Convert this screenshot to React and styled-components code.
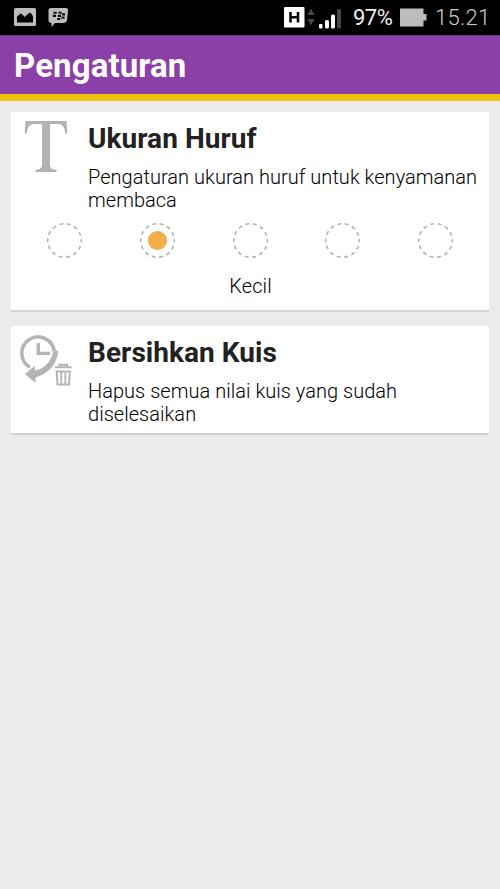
import React, { useState } from 'react'
import styled, { createGlobalStyle } from 'styled-components'

const GlobalStyle = createGlobalStyle`
    * {
        box-sizing: border-box;
    }
    body {
        margin: 0;
        background: #ebebeb;
        font-family: Roboto, sans-serif;
        color: #222;
    }
`

const Screen = styled.div({
    width: 500,
    height: 889,
    overflow: 'hidden',
    backgroundColor: '#ebebeb'
})

const StatusBar = styled.div({
    display: 'flex',
    justifyContent: 'space-between',
    height: 35,
    paddingRight: 10,
    backgroundColor: '#000'
})

const StatusText = styled.span`
    width: ${({ $width }) => $width}px;
    margin-left: 8px;
    font-size: 22px;
    line-height: 35px;
    font-weight: ${({ $weight }) => $weight};
    letter-spacing: ${({ $spacing }) => $spacing}px;
    color: ${({ $color }) => $color};
    white-space: nowrap;
`

const StatusGroup = styled.div({
    display: 'flex'
})

const Header = styled.header({
    height: 66,
    paddingLeft: 14,
    backgroundColor: '#8b3fa8',
    borderTop: '1px solid #6b3480',
    borderBottom: '7px solid #efc20f'
})

const HeaderTitle = styled.h1({
    margin: 0,
    fontSize: 33,
    lineHeight: '59px',
    fontWeight: 700,
    letterSpacing: 0.1,
    color: 'white'
})

const CardList = styled.main({
    display: 'flex',
    flexDirection: 'column',
    gap: 14,
    padding: '11px 11px 0'
})

const Card = styled.section`
    height: ${({ $height }) => $height}px;
    background: white;
    border-bottom: 2px solid #d2d2d2;
`

const CardTop = styled.div({
    display: 'flex'
})

const IconBox = styled.div({
    width: 77,
    height: 80,
    flexShrink: 0
})

const CardTitle = styled.h2`
    margin: 0;
    padding-top: 10px;
    font-size: 28px;
    line-height: 34px;
    font-weight: 700;
    letter-spacing: 0.05px;
`

const CardText = styled.p`
    margin: 10px 0 0;
    font-size: 20px;
    line-height: 23px;
    font-weight: 300;
    letter-spacing: 0.03px;
    color: #000;
    white-space: pre;
`

const SizeOptions = styled.div({
    display: 'flex',
    justifyContent: 'space-between',
    padding: '10px 35px 0'
})

const SizeButton = styled.button({
    width: 37,
    height: 37,
    padding: 0,
    border: 'none',
    background: 'none',
    cursor: 'pointer'
})

const SizeLabel = styled.div({
    marginTop: 16,
    paddingLeft: 1,
    fontSize: 20,
    lineHeight: '23px',
    fontWeight: 300,
    letterSpacing: 0.1,
    color: '#000',
    textAlign: 'center',
})

const SIZES = ['Sangat Kecil', 'Kecil', 'Sedang', 'Besar', 'Sangat Besar']

function NotificationIcons() {
    return (
        <svg width="80" height="35" viewBox="0 0 80 35">
            <rect x="14" y="8" width="22" height="18" rx="1.5" fill="#bdbdbd" />
            <path d="M17 22.5V16.500Q19 15 20.500 13.500Q22 13.500 24.500 17L28.500 13.500Q30 12 31.500 14L33 16.500V22.5Z" fill="#000" />
            <path d="M51 8H65.5Q68.5 8 68 11L67 20Q66.5 23 63.5 23H55L51.5 27V23Q48.500 22.500 48.500 20V10.500Q48.500 8 51 8Z" fill="#bdbdbd" />
            <g stroke="#111" strokeWidth="2.1">
                <path d="M53.500 12.800H56.700M58.500 12.800H61.700M52.800 15.900H56M57.800 15.900H61M62 14.400H65M57.200 19H60.300M61.500 17.600H64.500" />
            </g>
        </svg>
    )
}

function SignalIcon() {
    return (
        <svg width="62" height="35" viewBox="283 0 62 35">
            <rect x="284" y="7" width="20.500" height="20.500" rx="1" fill="#fff" />
            <path d="M290.500 12V22.500M298 12V22.500M290.500 17.200H298" stroke="#000" strokeWidth="2.500" />
            <path d="M307.500 15L311 8.500L314.500 15ZM307.500 19H314.500L311 25.500Z" fill="#484848" />
            <rect x="319" y="24" width="3.500" height="4.500" rx="1" fill="#fff" />
            <rect x="325" y="20" width="4" height="8.500" rx="1.500" fill="#fff" />
            <rect x="331" y="14.500" width="4" height="14" rx="1.500" fill="#fff" />
            <rect x="337" y="9" width="4" height="19.500" rx="1" fill="#464646" />
        </svg>
    )
}

function BatteryIcon() {
    return (
        <svg width="32" height="35" viewBox="-5 0 32 35">
            <path d="M0 8.500H23.500V14H26.500V20.500H23.500V26.500H0Z" fill="#bdbdbd" />
        </svg>
    )
}

function LetterIcon() {
    return (
        <svg width="77" height="80" viewBox="11 112 77 80">
            <path
                d="M25.500 121H66.500L67.300 133.500H65.500Q64.500 124 58 124H50V165Q50 169.500 56.500 169.800V172H35.500V169.800Q42 169.500 42 165V124H34Q27.500 124 26.500 133.500H24.700Z"
                fill="#b3b3b3"
            />
        </svg>
    )
}

function ClearHistoryIcon() {
    return (
        <svg width="77" height="80" viewBox="11 326 77 80">
            <g fill="none" stroke="#b5b5b5">
                <path d="M29.800 367.300A16.300 16.300 0 1 1 54.300 351.500" strokeWidth="3.500" />
                <path d="M38.300 343V353.400H50" strokeWidth="3.400" />
                <path d="M55 367.300H71.500M59.500 367V364.700H67V367" strokeWidth="2" />
                <path d="M56.700 371.500H69.800L69 384.500H57.500Z" strokeWidth="2" />
                <path d="M61.300 372V384M65.300 372V384" strokeWidth="1.800" />
            </g>
            <path d="M53 352L57 350.500Q58.500 350 58 353.500Q54.500 371.500 35.500 377.500V383L25 374L34.500 366L35 370.500Q49.500 367.500 53 352Z" fill="#b5b5b5" />
        </svg>
    )
}

function SizeOption({ selected, onClick }) {
    return (
        <SizeButton onClick={onClick}>
            <svg width="37" height="37" viewBox="0 0 37 37" display="block">
                <circle cx="18.500" cy="18.500" r="16.800" fill="none" stroke="#b4b4b4" strokeWidth="1.600" strokeDasharray="4 3.540" strokeDashoffset="2" />
                {selected ? <circle cx="18.500" cy="18.500" r="9.600" fill="#f2ae49" /> : null}
            </svg>
        </SizeButton>
    )
}

export default function App() {

    const [size, setSize] = useState(1)

    return (
        <Screen>
            <GlobalStyle />
            <StatusBar>
                <NotificationIcons />
                <StatusGroup>
                    <SignalIcon />
                    <StatusText $width={42} $weight={400} $spacing={-0.5} $color="#eee">97%</StatusText>
                    <BatteryIcon />
                    <StatusText $width={55} $weight={300} $spacing={0.3} $color="#ccc">15.21</StatusText>
                </StatusGroup>
            </StatusBar>
            <Header>
                <HeaderTitle>Pengaturan</HeaderTitle>
            </Header>
            <CardList>
                <Card $height={200}>
                    <CardTop>
                        <IconBox><LetterIcon /></IconBox>
                        <div>
                            <CardTitle>Ukuran Huruf</CardTitle>
                            <CardText>{'Pengaturan ukuran huruf untuk kenyamanan\nmembaca'}</CardText>
                        </div>
                    </CardTop>
                    <SizeOptions>
                        {SIZES.map((name, i) => <SizeOption key={name} selected={i === size} onClick={() => setSize(i)} />)}
                    </SizeOptions>
                    <SizeLabel>{SIZES[size]}</SizeLabel>
                </Card>
                <Card $height={109}>
                    <CardTop>
                        <IconBox><ClearHistoryIcon /></IconBox>
                        <div>
                            <CardTitle>Bersihkan Kuis</CardTitle>
                            <CardText>{'Hapus semua nilai kuis yang sudah\ndiselesaikan'}</CardText>
                        </div>
                    </CardTop>
                </Card>
            </CardList>
        </Screen>
    )
}
